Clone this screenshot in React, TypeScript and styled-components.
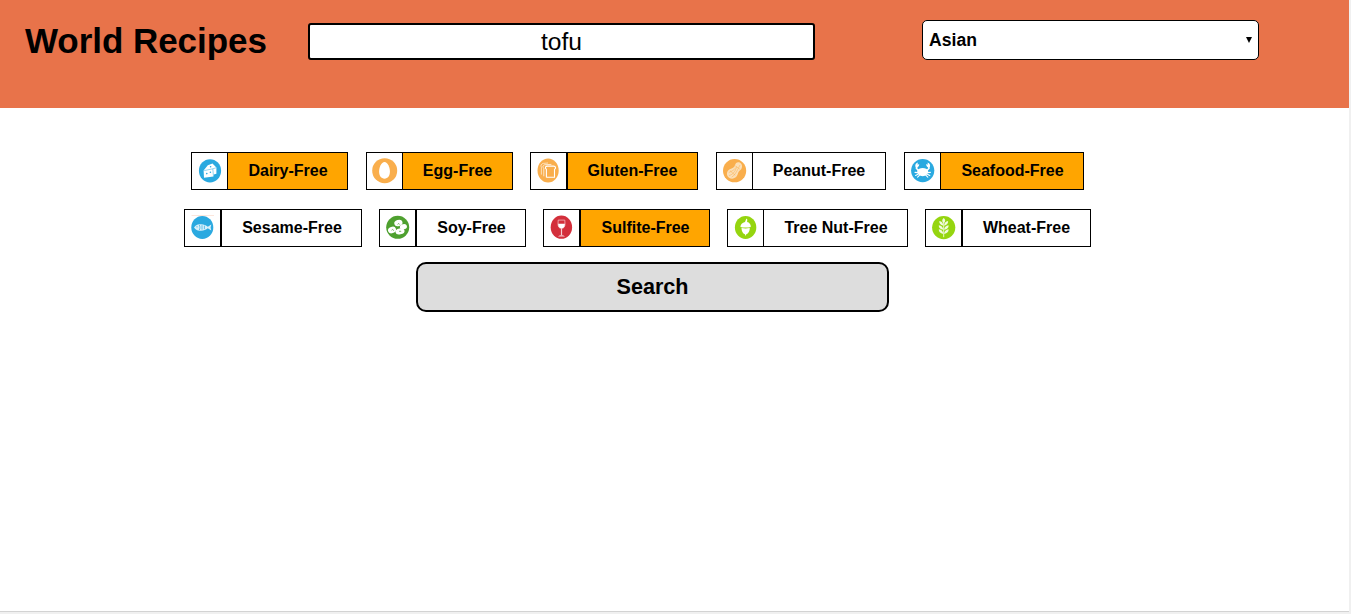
import React, { useState } from "react";
import styled, { createGlobalStyle } from "styled-components";

const GlobalStyle = createGlobalStyle`
  *, *::before, *::after { box-sizing: border-box; }
  body {
    margin: 0;
    background: #f0f0f0;
    color: #000;
    font-family: "Liberation Sans", Arial, sans-serif;
  }
`;

const Page = styled.div`
  width: 1349px;
  height: 612px;
  background: #fff;
  border-bottom: 1px solid #d3d3d3;
`;

const Header = styled.header`
  display: flex;
  align-items: flex-start;
  height: 108px;
  padding: 20px 90px 0 25px;
  background: #e8734a;
`;

const Title = styled.h1`
  width: 283px;
  margin: 0;
  font-size: 35px;
  line-height: 42px;
  font-weight: bold;
  letter-spacing: -0.05px;
  white-space: nowrap;
`;

const SearchInput = styled.input`
  width: 507px;
  height: 37px;
  margin: 3px 107px 0 0;
  padding: 0;
  border: 2px solid #000;
  border-radius: 3px;
  outline: none;
  background: #fff;
  color: #000;
  font-family: inherit;
  font-size: 24.6px;
  text-align: center;
`;

const SelectWrap = styled.div`
  display: flex;
  align-items: center;
  width: 337px;
  height: 40px;
  padding-right: 6px;
  border: 1px solid #000;
  border-radius: 5px;
  background: #fff;
`;

const CuisineSelect = styled.select`
  flex: 1;
  height: 100%;
  padding: 0 0 0 6px;
  border: 0;
  outline: none;
  appearance: none;
  background: transparent;
  color: #000;
  font-family: inherit;
  font-size: 17.6px;
  font-weight: bold;
`;

const Filters = styled.main`
  padding-top: 44px;
`;

const ChipRow = styled.div<{ $indent: number }>`
  display: flex;
  height: 38px;
  padding-left: ${(p) => p.$indent}px;
  margin-bottom: 19px;
`;

const Chip = styled.button<{ $width: number; $gap: number }>`
  display: flex;
  flex: none;
  width: ${(p) => p.$width}px;
  height: 38px;
  margin: 0 ${(p) => p.$gap}px 0 0;
  padding: 0;
  border: 1px solid #000;
  background: #fff;
  color: #000;
  font: bold 16px "Liberation Sans", Arial, sans-serif;
`;

const ChipIcon = styled.svg`
  display: block;
  flex: none;
  width: 35px;
  height: 36px;
`;

const ChipLabel = styled.span<{ $active: boolean; $divider: number; $nudge: number }>`
  display: flex;
  flex: 1;
  align-items: center;
  justify-content: center;
  height: 36px;
  padding-left: ${(p) => p.$nudge}px;
  border-left: ${(p) => p.$divider}px solid #000;
  background: ${(p) => (p.$active ? "#ffa500" : "#fff")};
  white-space: nowrap;
`;

const SearchButton = styled.button`
  display: block;
  width: 473px;
  height: 50px;
  margin: -4px 0 0 416px;
  padding: 0;
  border: 2px solid #000;
  border-radius: 10px;
  background: #ddd;
  color: #000;
  font: bold 21.6px "Liberation Sans", Arial, sans-serif;
`;

const icons: Record<string, React.ReactNode> = {
  dairy: (
    <>
      <ellipse cx="18" cy="17.8" rx="11.1" ry="11.6" fill="#2aa9e0" />
      <path d="M11.6 17.4 15.8 12.2 20.5 10.6 24.4 14.6 24.4 20.8 21.8 21.4 21.4 23.4 12 24.8Z" fill="#fff" />
      <path d="M12.2 17.6 20.8 15.8 21.4 22.6M20.8 15.8 24 14.8" fill="none" stroke="#2aa9e0" strokeWidth=".5" />
      <circle cx="14.8" cy="20.6" r=".8" fill="#2aa9e0" />
      <circle cx="18.4" cy="19.2" r=".8" fill="#2aa9e0" />
      <circle cx="18.6" cy="13.7" r=".8" fill="#2aa9e0" />
    </>
  ),
  egg: (
    <>
      <circle cx="17.7" cy="17.7" r="12.5" fill="#f9ae4c" />
      <path d="M17.5 9C20.7 9 22.9 14.2 22.9 18.6C22.9 23 20.8 25.7 17.5 25.7S12.1 23 12.1 18.6C12.1 14.2 14.3 9 17.5 9Z" fill="#fff" />
    </>
  ),
  gluten: (
    <>
      <ellipse cx="17.1" cy="17.5" rx="10.6" ry="12.1" fill="#f9ae4c" />
      <g fill="none" stroke="#fff" strokeWidth="1.1" strokeLinejoin="round">
        <path d="M15.4 24.6V16.3C13.7 14.9 14.4 13.1 16.4 13.1H22.6C24.8 13.1 25.2 15.3 23.5 16.4V24.2H15.4" />
        <path d="M12.8 23.3V15.2C11.2 13.9 12 12 14 11.7L20.4 11.4" strokeWidth=".7" />
        <path d="M10.4 21.6V14.2C9.2 12.9 10.2 10.8 12.2 10.4L17 10" strokeWidth=".6" />
      </g>
    </>
  ),
  peanut: (
    <>
      <circle cx="17.6" cy="17.7" r="11.6" fill="#f9ae4c" />
      <path d="M22.8 9.5C25.6 11.1 25.8 14.9 23.4 17C21.4 18.7 21.4 19.2 20.6 21.6C19.4 25.2 15.4 27 12 24.8C9 22.8 9.4 18.4 12.3 16.6C15 15 16.9 15.3 17.8 12.5C18.6 9.6 20.4 8.5 22.8 9.5Z" fill="#fbdfb7" />
      <g fill="none" stroke="#f9ae4c" strokeWidth=".5">
        <path d="M12 22.5C15.5 21.8 18.6 18.5 19.6 13.5M14.7 24.2C18.4 22 20.5 17 23 12M11.8 19.5C15 18.4 17 16.7 18.6 15M18.3 12.9 22.9 16.2M13 17.7 18.3 22.4" />
      </g>
    </>
  ),
  seafood: (
    <>
      <circle cx="17.7" cy="17.6" r="11.6" fill="#2aa9e0" />
      <path d="M12.2 18C13 15.6 15 14.9 17.7 14.9S22.4 15.6 23.2 18C23.2 21.2 20.8 23.2 17.7 23.2S12.2 21.2 12.2 18Z" fill="#fff" />
      <g fill="none" stroke="#fff" strokeWidth="1.1" strokeLinecap="round">
        <path d="M13.2 17.2 11.4 15.3 12 13.4M22.2 17.2 24 15.3 23.4 13.4" strokeWidth="1.5" />
        <path d="M12.6 19.6 10 19.4M22.8 19.6 25.4 19.4M13 21.2 10.6 22.4M22.4 21.2 24.8 22.4M14.4 22.4 12.6 24.2M21 22.4 22.8 24.2" />
      </g>
      <path d="M10.6 14.5C9.7 12.1 10.7 10.3 12.8 9.6L12.6 11.7 14.2 11C14.3 13.2 12.8 14.9 10.6 14.5ZM24.8 14.5C25.7 12.1 24.7 10.3 22.6 9.6L22.8 11.7 21.2 11C21.1 13.2 22.6 14.9 24.8 14.5Z" fill="#fff" />
    </>
  ),
  fish: (
    <>
      <path d="M6.5 5.5H29" stroke="#fbe6dc" strokeWidth="1" />
      <ellipse cx="17.3" cy="17.4" rx="11" ry="11.5" fill="#2aa9e0" />
      <path d="M9 17.4C11 14.7 13 14.2 16 14.2C19 14.2 21 15.4 22.8 16.7L26.3 14.4 25.6 17.4 26.3 20.6 22.8 18.3C21 19.5 19 20.7 16 20.7C13 20.7 11 20.2 9 17.4Z" fill="#d9f0fa" />
      <path d="M14.2 14.8C15.2 16.5 15.2 18.5 14.2 20.2M17 15.2V19.6M19.4 15.6V19.2" fill="none" stroke="#2aa9e0" strokeWidth=".7" />
      <circle cx="12" cy="16.8" r=".6" fill="#2aa9e0" />
    </>
  ),
  soy: (
    <>
      <circle cx="17.7" cy="17.3" r="11.5" fill="#4ea02f" />
      <g fill="#fff">
        <ellipse cx="18.4" cy="13" rx="4.2" ry="3.1" transform="rotate(-18 18.4 13)" />
        <ellipse cx="12" cy="20" rx="4.1" ry="3.2" transform="rotate(-18 12 20)" />
        <ellipse cx="23.4" cy="16.8" rx="3.6" ry="2.7" transform="rotate(-18 23.4 16.8)" />
        <ellipse cx="20" cy="21.4" rx="4.6" ry="3" transform="rotate(-12 20 21.4)" />
      </g>
      <path d="M17.6 14.4C18.2 13.2 19.3 13.6 19.6 14.4M11.6 20.2C12.4 19.1 13.4 19.5 13.6 20.6M19 21.8C19.9 20.7 20.8 21.1 21 22" fill="none" stroke="#4ea02f" strokeWidth=".8" />
    </>
  ),
  wine: (
    <>
      <ellipse cx="17.4" cy="17.2" rx="10.7" ry="11.6" fill="#d32f3b" />
      <path d="M14.2 10.1H20.8L21 14C21 17 19.7 18.4 17.5 18.4S14 17 14 14Z" fill="none" stroke="#f3b9bd" strokeWidth=".8" />
      <path d="M14.1 13.7H20.9C20.9 17 19.6 18.3 17.5 18.3S14.1 17 14.1 13.7Z" fill="#fff" />
      <path d="M17.5 18V25.3" stroke="#f7ced1" strokeWidth="1.2" />
      <path d="M14 26.4C15.4 24.9 19.6 24.9 21 26.4Z" fill="#f7ced1" />
    </>
  ),
  nut: (
    <>
      <ellipse cx="17.6" cy="17.4" rx="10.7" ry="11.5" fill="#95d50f" />
      <path d="M18.4 8.6 19.3 9.4 19.1 12C21.5 12.5 22.8 14.3 22.8 16.9C20 17.8 15 17.8 12.4 16.9C12.5 14.4 14.2 12.6 17 12Z" fill="#fff" />
      <path d="M13.5 18C16 18.6 19.1 18.6 21.8 18C21.8 21.4 20.4 23.5 18.3 24.3L17.6 26 16.9 24.3C14.7 23.5 13.6 21.4 13.5 18Z" fill="#fff" />
    </>
  ),
  wheat: (
    <>
      <circle cx="17.7" cy="17.6" r="11.6" fill="#95d50f" />
      <g fill="#f1fae0">
        <path d="M17.7 8C19.7 9.8 19.7 11.4 17.7 13.4C15.7 11.4 15.7 9.8 17.7 8Z" />
        <path d="M17.3 15.7C14.5 15.3 13.1 13.6 13.3 11.1C15.9 11.7 17.2 13.2 17.3 15.7ZM18.1 15.7C20.9 15.3 22.3 13.6 22.1 11.1C19.5 11.7 18.2 13.2 18.1 15.7Z" />
        <path d="M17.3 19.8C14.2 19.4 12.6 17.7 12.8 15.2C15.6 15.8 17.2 17.3 17.3 19.8ZM18.1 19.8C21.2 19.4 22.8 17.7 22.6 15.2C19.8 15.8 18.2 17.3 18.1 19.8Z" />
        <path d="M17.3 23.9C14.2 23.5 12.6 21.8 12.8 19.3C15.6 19.9 17.2 21.4 17.3 23.9ZM18.1 23.9C21.2 23.5 22.8 21.8 22.6 19.3C19.8 19.9 18.2 21.4 18.1 23.9Z" />
      </g>
      <path d="M17.7 13V27.2" stroke="#f1fae0" strokeWidth=".9" />
    </>
  ),
};

type Allergy = { name: string; icon: string; width: number; gap: number; divider: number; nudge?: number };

const rows: { indent: number; items: Allergy[] }[] = [
  {
    indent: 191,
    items: [
      { name: "Dairy-Free", icon: "dairy", width: 157, gap: 18, divider: 1, nudge: 1 },
      { name: "Egg-Free", icon: "egg", width: 147, gap: 17, divider: 1 },
      { name: "Gluten-Free", icon: "gluten", width: 168, gap: 18, divider: 2 },
      { name: "Peanut-Free", icon: "peanut", width: 170, gap: 18, divider: 1 },
      { name: "Seafood-Free", icon: "seafood", width: 180, gap: 0, divider: 1, nudge: 1 },
    ],
  },
  {
    indent: 184,
    items: [
      { name: "Sesame-Free", icon: "fish", width: 178, gap: 17, divider: 2, nudge: 1 },
      { name: "Soy-Free", icon: "soy", width: 147, gap: 17, divider: 2, nudge: 1 },
      { name: "Sulfite-Free", icon: "wine", width: 167, gap: 17, divider: 2, nudge: 1 },
      { name: "Tree Nut-Free", icon: "nut", width: 181, gap: 17, divider: 1, nudge: 1 },
      { name: "Wheat-Free", icon: "wheat", width: 166, gap: 0, divider: 2 },
    ],
  },
];

export default function App() {
  const [query, setQuery] = useState("tofu");
  const [selected, setSelected] = useState<string[]>([
    "Dairy-Free",
    "Egg-Free",
    "Gluten-Free",
    "Seafood-Free",
    "Sulfite-Free",
  ]);

  const toggle = (name: string) =>
    setSelected((list) => (list.includes(name) ? list.filter((n) => n !== name) : [...list, name]));

  return (
    <>
      <GlobalStyle />
      <Page>
        <Header>
          <Title>World Recipes</Title>
          <SearchInput value={query} onChange={(e) => setQuery(e.target.value)} />
          <SelectWrap>
            <CuisineSelect defaultValue="Asian">
              <option>Asian</option>
            </CuisineSelect>
            <svg width="6" height="6" viewBox="0 0 6 6">
              <path d="M0 0H6L3 6Z" />
            </svg>
          </SelectWrap>
        </Header>
        <Filters>
          {rows.map((row) => (
            <ChipRow key={row.indent} $indent={row.indent}>
              {row.items.map((item) => (
                <Chip key={item.name} $width={item.width} $gap={item.gap} onClick={() => toggle(item.name)}>
                  <ChipIcon viewBox="0 0 35 36">{icons[item.icon]}</ChipIcon>
                  <ChipLabel
                    $active={selected.includes(item.name)}
                    $divider={item.divider}
                    $nudge={item.nudge ?? 0}
                  >
                    {item.name}
                  </ChipLabel>
                </Chip>
              ))}
            </ChipRow>
          ))}
          <SearchButton>Search</SearchButton>
        </Filters>
      </Page>
    </>
  );
}
